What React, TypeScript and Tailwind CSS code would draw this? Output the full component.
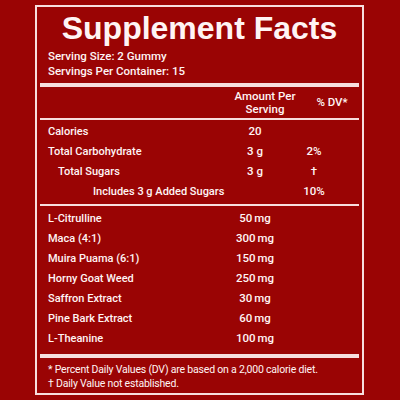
import React from "react";

const rows = [
  { label: "Calories", amt: "20", dv: "", indent: "pl-[8px]" },
  { label: "Total Carbohydrate", amt: "3 g", dv: "2%", indent: "pl-[8px]" },
  { label: "Total Sugars", amt: "3 g", dv: "†", indent: "pl-[18px]" },
];

const ingredients = [
  ["L-Citrulline", "50", "mg"],
  ["Maca (4:1)", "300", "mg"],
  ["Muira Puama (6:1)", "150", "mg"],
  ["Horny Goat Weed", "250", "mg"],
  ["Saffron Extract", "30", "mg"],
  ["Pine Bark Extract", "60", "mg"],
  ["L-Theanine", "100", "mg"],
];

export default function App() {
  return (
    <div
      className="w-[400px] h-[400px] bg-[#9a0404] pt-[5px] pl-[35px] text-[#fff4f4]"
      style={{ fontFamily: "Roboto, 'Liberation Sans', sans-serif" }}
    >
      <div className="w-[329px] h-[390px] border-2 border-[#f7dede] px-[3px] flex flex-col">
        <div
          className="mt-[5px] h-[32px] leading-[32px] text-center text-[32px] font-bold"
          style={{ fontFamily: "'Liberation Sans', Arial, sans-serif" }}
        >
          Supplement Facts
        </div>
        <div className="mt-[5px] pl-[8px] text-[11.5px] font-medium leading-[15px]">
          <div>Serving Size: 2 Gummy</div>
          <div>Servings Per Container: 15</div>
        </div>
        <div className="mt-[4px] h-[4px] bg-[#f7dede]" />
        <div className="h-[31px] grid grid-cols-[190px_70px_1fr] items-center text-[11.5px] font-medium leading-[13px]">
          <div />
          <div className="text-center">
            Amount Per
            <br />
            Serving
          </div>
          <div className="text-center pl-[5px]">% DV*</div>
        </div>
        <div className="h-[2px] bg-[#f7dede]" />
        <div className="pt-[2px] pb-[2px] text-[11px] font-medium">
          {rows.map((r) => (
            <div
              key={r.label}
              className="h-[20px] grid grid-cols-[185px_60px_58px_1fr] items-center"
            >
              <div className={r.indent}>{r.label}</div>
              <div className="text-center text-[11.5px]">{r.amt}</div>
              <div className="text-center text-[11.5px]">{r.dv}</div>
              <div />
            </div>
          ))}
          <div className="h-[20px] grid grid-cols-[185px_60px_58px_1fr] items-center">
            <div className="pl-[53px] whitespace-nowrap">Includes 3 g Added Sugars</div>
            <div />
            <div className="text-center text-[11.5px]">10%</div>
            <div />
          </div>
        </div>
        <div className="h-[2px] bg-[#f7dede]" />
        <div className="pt-[3px] pb-[5px] text-[11px] font-medium">
          {ingredients.map(([name, n, u]) => (
            <div
              key={name}
              className="h-[20px] grid grid-cols-[185px_60px_1fr] items-center"
            >
              <div className="pl-[8px]">{name}</div>
              <div className="text-center text-[11.5px]">
                {n}
                <span className="ml-[2px]">{u}</span>
              </div>
              <div />
            </div>
          ))}
        </div>
        <div className="h-[4px] bg-[#f7dede]" />
        <div className="pt-[5px] pl-[8px] text-[10.5px] leading-[14px] tracking-[-0.2px]">
          <div className="whitespace-nowrap">
            * Percent Daily Values (DV) are based on a 2,000 calorie diet.
          </div>
          <div>† Daily Value not established.</div>
        </div>
      </div>
    </div>
  );
}
